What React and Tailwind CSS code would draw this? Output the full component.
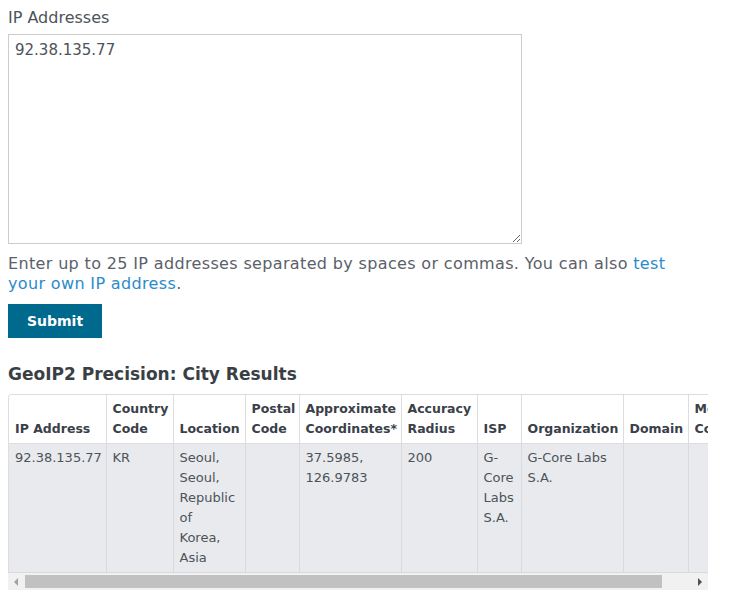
import React from "react";

const cols = [
  { w: 97, h: ["IP Address"], b: ["92.38.135.77"] },
  { w: 67, h: ["Country", "Code"], b: ["KR"] },
  { w: 72, h: ["Location"], b: ["Seoul,", "Seoul,", "Republic", "of", "Korea,", "Asia"] },
  { w: 54, h: ["Postal", "Code"], b: [] },
  { w: 102, h: ["Approximate", "Coordinates*"], b: ["37.5985,", "126.9783"] },
  { w: 76, h: ["Accuracy", "Radius"], b: ["200"] },
  { w: 44, h: ["ISP"], b: ["G-", "Core", "Labs", "S.A."] },
  { w: 102, h: ["Organization"], b: ["G-Core Labs", "S.A."] },
  { w: 65, h: ["Domain"], b: [] },
  { w: 60, h: ["Metro", "Code"], b: [] },
];

const F = '"DejaVu Sans", "Liberation Sans", sans-serif';

export default function App() {
  return (
    <div className="bg-white text-[#4d5359] px-2 pt-[8px]" style={{ fontFamily: F }}>
      <div className="w-[700px]">
        <div className="text-[16px] leading-[20px] text-[#4d5359]">IP Addresses</div>
        <textarea
          defaultValue="92.38.135.77"
          className="mt-[6px] block w-[514px] h-[210px] border border-[#cccccc] px-[6px] pt-[5px] pb-[4px] text-[15px] leading-[20px] text-[#4d5359] outline-none resize"
          style={{ fontFamily: F }}
        />
        <p className="mt-[10px] text-[16px] tracking-[0.35px] leading-[20px] text-[#5a6169]">
          Enter up to 25 IP addresses separated by spaces or commas. You can also{" "}
          <span className="text-[#2a8bcb]">test your own IP address</span>.
        </p>
        <button className="mt-[10px] block bg-[#006a8e] text-white font-bold text-[14px] w-[94px] h-[34px]">
          Submit
        </button>
        <h2 className="mt-[24px] text-[17px] leading-[24px] font-bold text-[#3a3f45]">
          GeoIP2 Precision: City Results
        </h2>
        <div className="mt-[8px] w-[700px] overflow-hidden rounded-tl-[4px] border-t border-l border-[#dddddd]">
          <table className="table-fixed border-collapse text-[13px] leading-[20px] w-[739px]">
            <colgroup>
              {cols.map((c, i) => (
                <col key={i} style={{ width: c.w }} />
              ))}
            </colgroup>
            <thead>
              <tr className="bg-white">
                {cols.map((c, i) => (
                  <th
                    key={i}
                    className="border-r border-b border-[#dddddd] px-[6px] pt-[4px] pb-[4px] text-left align-bottom font-bold text-[12.5px] text-[#3a4048] whitespace-nowrap"
                  >
                    {c.h.map((t, j) => (
                      <div key={j}>{t}</div>
                    ))}
                  </th>
                ))}
              </tr>
            </thead>
            <tbody>
              <tr className="bg-[#e8eaee]">
                {cols.map((c, i) => (
                  <td
                    key={i}
                    className="border-r border-b border-[#d8dadd] px-[6px] pt-[4px] pb-[4px] align-top text-[#4d5359] whitespace-nowrap h-[129px]"
                  >
                    {c.b.map((t, j) => (
                      <div key={j}>{t}</div>
                    ))}
                  </td>
                ))}
              </tr>
            </tbody>
          </table>
        </div>
        <div className="w-[700px] h-[17px] bg-[#f1f1f1] flex items-center">
          <div className="w-[17px] flex justify-center">
            <svg width="5" height="8" viewBox="0 0 5 8">
              <path d="M4 0 L0 4 L4 8 Z" fill="#a3a3a3" />
            </svg>
          </div>
          <div className="w-[637px] h-[13px] bg-[#c1c1c1]" />
          <div className="flex-1" />
          <div className="w-[17px] flex justify-center">
            <svg width="5" height="8" viewBox="0 0 5 8">
              <path d="M1 0 L5 4 L1 8 Z" fill="#505050" />
            </svg>
          </div>
        </div>
      </div>
    </div>
  );
}
